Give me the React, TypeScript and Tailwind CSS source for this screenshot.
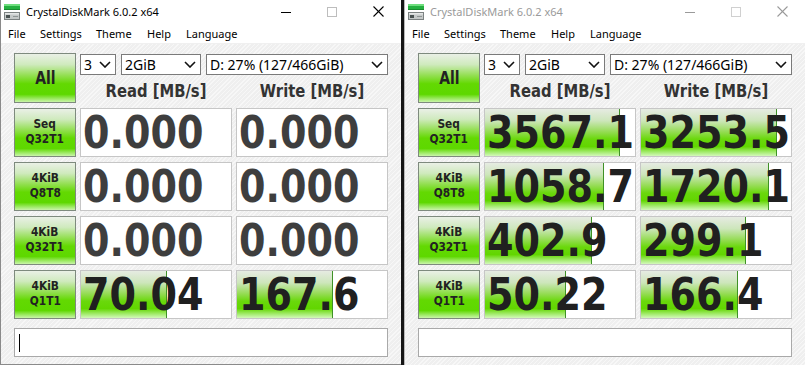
import React from "react";

type Row = { l1: string; l2: string; r: string; w: string; rb: number; wb: number; zero?: boolean };

const leftRows: Row[] = [
  { l1: "Seq", l2: "Q32T1", r: "0.000", w: "0.000", rb: 0, wb: 0, zero: true },
  { l1: "4KiB", l2: "Q8T8", r: "0.000", w: "0.000", rb: 0, wb: 0, zero: true },
  { l1: "4KiB", l2: "Q32T1", r: "0.000", w: "0.000", rb: 0, wb: 0, zero: true },
  { l1: "4KiB", l2: "Q1T1", r: "70.04", w: "167.6", rb: 86, wb: 96 },
];

const rightRows: Row[] = [
  { l1: "Seq", l2: "Q32T1", r: "3567.1", w: "3253.5", rb: 135, wb: 136 },
  { l1: "4KiB", l2: "Q8T8", r: "1058.7", w: "1720.1", rb: 119, wb: 128 },
  { l1: "4KiB", l2: "Q32T1", r: "402.9", w: "299.1", rb: 107, wb: 105 },
  { l1: "4KiB", l2: "Q1T1", r: "50.22", w: "166.4", rb: 81, wb: 97 },
];

function AppIcon() {
  return (
    <svg width="16" height="16" viewBox="0 0 16 16" className="shrink-0">
      <rect x="0" y="0" width="16" height="6" fill="#25b040" />
      <rect x="0" y="0" width="16" height="2" fill="#6fde7e" />
      <rect x="0" y="5" width="16" height="1" fill="#178a2c" />
      <rect x="0.5" y="8.5" width="15" height="7" fill="#c4c8c8" stroke="#7c8282" />
      <rect x="1" y="9" width="14" height="1.5" fill="#e4e6e6" />
      <rect x="2" y="11" width="4" height="3" fill="#4a5252" />
      <rect x="9" y="12" width="5" height="1" fill="#8e9494" />
    </svg>
  );
}

function Chevron() {
  return (
    <svg width="12" height="7" viewBox="0 0 12 7" className="shrink-0">
      <polyline points="1,1 6,6 11,1" fill="none" stroke="#111" strokeWidth="1.6" />
    </svg>
  );
}

function Select({ w, text }: { w: string; text: string }) {
  return (
    <div
      className={`${w} h-[21px] bg-white border border-[#7a7a7a] flex items-center justify-between pl-[3px] pr-[4px] text-[14px] leading-none text-black font-['Noto_Sans','Open_Sans',sans-serif]`}
    >
      <span>{text}</span>
      <Chevron />
    </div>
  );
}

function LabelButton({ l1, l2 }: { l1: string; l2?: string }) {
  return (
    <div className="w-[62px] h-full shrink-0 border border-[#7e8a7e] bg-[linear-gradient(180deg,#eaf0e6_0%,#cfeabd_22%,#92df50_45%,#63d902_62%,#5ed800_84%,#a2eb6c_94%,#caf5aa_100%)] flex flex-col items-center justify-center text-[#222] font-['DejaVu_Sans',Verdana,sans-serif] font-bold">
      {l2 ? (
        <div className="flex flex-col items-center -mt-[2px] scale-x-[0.85] origin-center text-[12.5px] leading-[14.5px]">
          <div>{l1}</div>
          <div>{l2}</div>
        </div>
      ) : (
        <span className="inline-block scale-x-[0.82] origin-center text-[17px] leading-none">{l1}</span>
      )}
    </div>
  );
}

function ValueBox({ value, bar, zero }: { value: string; bar: number; zero?: boolean }) {
  return (
    <div className="relative w-[152px] h-full shrink-0 border border-[#c6c6c6] bg-white overflow-hidden flex items-center pl-[2px]">
      {bar > 0 && (
        <div
          className="absolute left-0 top-0 bottom-0 border-r border-[#3f9126] bg-[linear-gradient(180deg,#e6ebe2_0%,#cde6bb_25%,#96dc56_48%,#6ad80c_64%,#62d600_80%,#a6ec72_92%,#d4f8bc_100%)]"
          style={{ width: `${bar}px` }}
        />
      )}
      <span
        className={`relative inline-block origin-left scale-x-[0.865] text-[44px] leading-none font-bold font-['DejaVu_Sans',Verdana,sans-serif] ${
          zero ? "text-[#3e3e3e]" : "text-[#202020]"
        }`}
      >
        {value}
      </span>
    </div>
  );
}

function CaptionButtons({ active }: { active: boolean }) {
  const c = active ? "#000" : "#9a9a9a";
  return (
    <div className="ml-auto flex h-full">
      <div className="w-[46px] h-full flex items-center justify-center">
        <svg width="10" height="10" viewBox="0 0 10 10">
          <line x1="0" y1="5.5" x2="10" y2="5.5" stroke={c} strokeWidth="1" />
        </svg>
      </div>
      <div className="w-[46px] h-full flex items-center justify-center">
        <svg width="10" height="10" viewBox="0 0 10 10">
          <rect x="0.5" y="0.5" width="9" height="9" fill="none" stroke={active ? "#bdbdbd" : "#d0d0d0"} strokeWidth="1" />
        </svg>
      </div>
      <div className="w-[46px] h-full flex items-center justify-center">
        <svg width="11" height="11" viewBox="0 0 11 11">
          <line x1="0.5" y1="0.5" x2="10.5" y2="10.5" stroke={c} strokeWidth="1.1" />
          <line x1="10.5" y1="0.5" x2="0.5" y2="10.5" stroke={c} strokeWidth="1.1" />
        </svg>
      </div>
    </div>
  );
}

function Window({ active, rows, cursor }: { active: boolean; rows: Row[]; cursor?: boolean }) {
  return (
    <div
      className={`w-[401px] h-[365px] shrink-0 flex flex-col bg-white border-l ${
        active ? "border-[#8a8a8a] border-b" : "border-[#b8b8b8]"
      } font-['Noto_Sans','Open_Sans',sans-serif]`}
    >
      {/* title bar */}
      <div className="h-[23px] shrink-0 flex items-center">
        <div className="ml-[3px] mt-[1px]">
          <AppIcon />
        </div>
        <span className={`ml-[6px] text-[11px] leading-none ${active ? "text-black" : "text-[#9a9a9a]"}`}>
          CrystalDiskMark 6.0.2 x64
        </span>
        <CaptionButtons active={active} />
      </div>
      {/* menu bar */}
      <div className="h-[20px] shrink-0 flex items-center pl-[7px] text-[11px] leading-none text-black">
        <span className="w-[32px]">File</span>
        <span className="w-[56px]">Settings</span>
        <span className="w-[51px]">Theme</span>
        <span className="w-[39px]">Help</span>
        <span>Language</span>
      </div>
      {/* content */}
      <div className="flex-1 flex flex-col pl-[13px] pt-[9px] border-t border-[#f0f0f0] bg-[#f0f0f0] bg-[repeating-linear-gradient(135deg,#efefef_0px,#efefef_2px,#f7f7f7_2px,#f7f7f7_3px)]">
        <div className="flex gap-[4px] h-[50px]">
          <LabelButton l1="All" />
          <div className="w-[308px] flex flex-col">
            <div className="mt-[1px] flex gap-[5px]">
              <Select w="w-[36px]" text="3" />
              <Select w="w-[80px]" text="2GiB" />
              <Select w="w-[182px]" text="D: 27% (127/466GiB)" />
            </div>
            <div className="flex-1 flex gap-[4px] pt-[4px] font-['DejaVu_Sans',Verdana,sans-serif] font-bold text-[#333]">
              <div className="w-[152px] flex items-center justify-center">
                <span className="inline-block scale-x-[0.87] origin-center text-[17px] leading-none whitespace-nowrap">Read [MB/s]</span>
              </div>
              <div className="w-[152px] flex items-center justify-center">
                <span className="inline-block scale-x-[0.87] origin-center text-[17px] leading-none whitespace-nowrap">Write [MB/s]</span>
              </div>
            </div>
          </div>
        </div>
        <div className="mt-[5px] flex flex-col gap-[5px]">
          {rows.map((r, i) => (
            <div key={i} className="flex gap-[4px] h-[49px]">
              <LabelButton l1={r.l1} l2={r.l2} />
              <ValueBox value={r.r} bar={r.rb} zero={r.zero} />
              <ValueBox value={r.w} bar={r.wb} zero={r.zero} />
            </div>
          ))}
        </div>
        <div className="mt-[9px] w-[374px] h-[29px] bg-white border border-[#a9a9a9] flex items-center pl-[4px]">
          {cursor && <div className="w-[1px] h-[18px] bg-black" />}
        </div>
      </div>
    </div>
  );
}

export default function App() {
  return (
    <div className="w-[805px] h-[365px] flex overflow-hidden bg-[#1a1a1a]">
      <Window active rows={leftRows} cursor />
      <div className="w-[3px] h-full shrink-0 bg-[#151515]" />
      <Window active={false} rows={rightRows} />
    </div>
  );
}
